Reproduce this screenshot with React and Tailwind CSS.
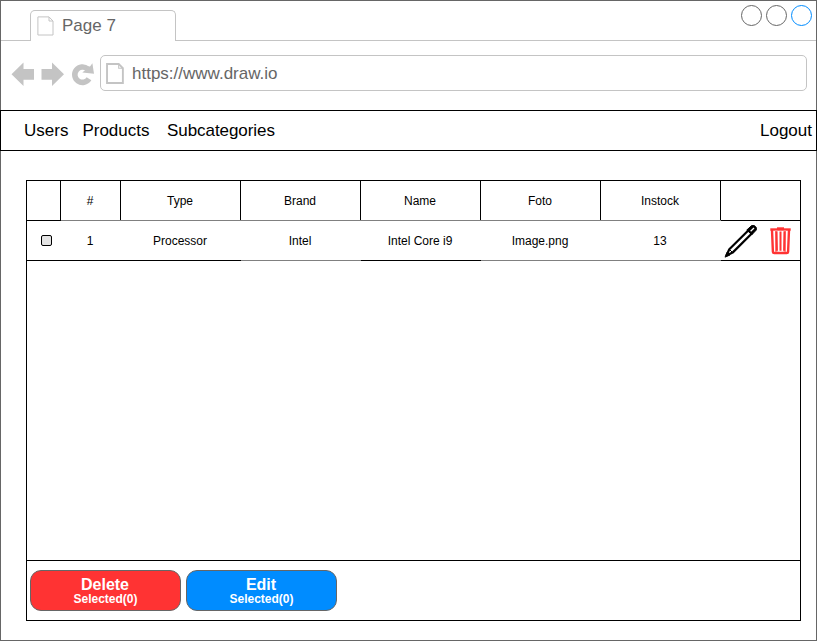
const columns = [
  { title: "", value: "check", width: "w-[34px]", head: "border-black", body: "border-black" },
  { title: "#", value: "1", width: "w-[60px]", head: "border-[#808080]", body: "border-black" },
  { title: "Type", value: "Processor", width: "w-[120px]", head: "border-[#808080]", body: "border-black" },
  { title: "Brand", value: "Intel", width: "w-[120px]", head: "border-[#808080]", body: "border-[#808080]" },
  { title: "Name", value: "Intel Core i9", width: "w-[120px]", head: "border-[#808080]", body: "border-black" },
  { title: "Foto", value: "Image.png", width: "w-[120px]", head: "border-[#808080]", body: "border-[#808080]" },
  { title: "Instock", value: "13", width: "w-[120px]", head: "border-[#808080]", body: "border-[#808080]" },
  { title: "", value: "actions", width: "w-[79px]", head: "border-black", body: "border-black" },
];

function PageIcon({ className, strokeWidth }) {
  return (
    <svg viewBox="0 0 17 20" className={className} fill="none" stroke="#c4c4c4" strokeWidth={strokeWidth}>
      <path d="M0.9 0.9H12L16 5V19H0.9Z" />
      <path d="M12 1V5H16" strokeWidth="1" />
    </svg>
  );
}

function BrowserIcons() {
  return (
    <svg width="84" height="26" viewBox="0 0 84 26" className="shrink-0" fill="#c4c4c4">
      <path d="M0.5 13.3L12.5 1.5V8H23V18.8H12.5V25Z" />
      <path d="M53 13.3L41 1.5V8H30.5V18.8H41V25Z" />
      <path d="M78 17.8A7.7 7.7 0 1 1 76.5 7.8" fill="none" stroke="#c4c4c4" strokeWidth="5.6" />
      <path d="M81.4 2.3L83 12.8L71.3 11.6L75.5 8L76 5.5L79 5.6Z" />
    </svg>
  );
}

function PencilIcon() {
  return (
    <svg width="34" height="34" viewBox="0 0 34 34" fill="none" stroke="#000" strokeLinejoin="round">
      <path d="M5.3 25.3L24.5 6.2L27.8 9.5L8.6 28.6L2.5 31.5Z" strokeWidth="2.2" />
      <path d="M5.3 25.3L8.6 28.6" strokeWidth="1" />
      <path d="M1 33.2L3 28.2L6 31Z" fill="#000" strokeWidth="0.8" />
      <path d="M22.8 6L27.6 1.6H30.3L32.3 3.5V6L27.8 10.8Z" fill="#000" strokeWidth="1" />
      <path d="M26.6 7.3L30 4" stroke="#fff" strokeWidth="1.3" />
    </svg>
  );
}

function TrashIcon() {
  return (
    <svg width="21" height="28" viewBox="0 0 21 28" fill="none" stroke="#ff3333">
      <path d="M0.3 2.5H20.7" strokeWidth="2.4" />
      <path d="M7 1.2H14" strokeWidth="1.8" />
      <path d="M2 3L2.9 24.8Q3 26 4.3 26H16.7Q18 26 18.1 24.8L19 3" strokeWidth="2.4" />
      <path d="M6.2 3V25M14.8 3V25" stroke="#ff8080" strokeWidth="2.4" />
      <path d="M6.4 4.5L6.9 23.8M10.5 4.5V23.8M14.6 4.5L14.1 23.8" strokeWidth="2" />
    </svg>
  );
}

function Cell({ value }) {
  if (value === "check") {
    return <span className="mr-[-5px] h-[11px] w-[11px] rounded-[2px] border border-black bg-[#e4e4e4]" />;
  }
  if (value === "actions") {
    return (
      <div className="flex w-full items-center gap-[12px] pl-[3px]">
        <PencilIcon />
        <TrashIcon />
      </div>
    );
  }
  return <span className="pr-[2px]">{value}</span>;
}

function ActionButton({ label, className }) {
  return (
    <button
      className={`flex h-[41px] w-[151px] flex-col items-center rounded-[11px] border border-[#666666] pt-[5px] font-bold text-white ${className}`}
    >
      <span className="pr-px text-[16px] leading-[17px]">{label}</span>
      <span className="text-[12px] leading-[12px]">Selected(0)</span>
    </button>
  );
}

export default function App() {
  return (
    <div className="flex h-[641px] w-[817px] flex-col overflow-hidden bg-white font-['Liberation_Sans',Arial,sans-serif]">
      <header className="flex h-[110px] shrink-0 flex-col border-x border-t border-[#666666] text-[17px] text-[#666666]">
        <div className="flex h-[40px] items-end">
          <div className="h-full w-[29px] border-b border-[#c4c4c4]" />
          <div className="flex h-[31px] w-[146px] items-start rounded-t-[5px] border-x border-t border-[#c4c4c4] pl-[6px]">
            <PageIcon className="mt-[5px] h-[20px] w-[17px]" strokeWidth="1" />
            <span className="ml-[8px] mt-[5px] leading-[19px]">Page 7</span>
          </div>
          <div className="flex h-full flex-1 items-start justify-end gap-1 border-b border-[#c4c4c4] pr-1 pt-1">
            <span className="h-[21px] w-[21px] rounded-full border border-[#666666]" />
            <span className="h-[21px] w-[21px] rounded-full border border-[#666666]" />
            <span className="h-[21px] w-[21px] rounded-full border border-[#008cff]" />
          </div>
        </div>
        <div className="flex pl-[10px] pt-[14px]">
          <div className="w-[89px] pt-[6px]">
            <BrowserIcons />
          </div>
          <div className="flex h-[36px] w-[707px] items-center rounded-[5px] border border-[#c4c4c4] pl-[5px]">
            <PageIcon className="h-[21px] w-[18px]" strokeWidth="1.8" />
            <span className="ml-[8px] leading-[19px]">https://www.draw.io</span>
          </div>
        </div>
      </header>

      <nav className="flex h-[41px] shrink-0 items-center border border-black pl-[23px] pr-[4px] text-[17px] text-black">
        <a>Users</a>
        <a className="ml-[14px]">Products</a>
        <a className="ml-[17.5px] tracking-[-0.06px]">Subcategories</a>
        <a className="ml-auto">Logout</a>
      </nav>

      <main className="flex-1 border-x border-b border-[#666666] pl-[25px] pt-[29px]">
        <div className="flex h-[441px] w-[775px] flex-col border border-black text-[12px] text-black">
          <div className="flex h-[40px] shrink-0">
            {columns.map((col, i) => (
              <div
                key={i}
                className={`flex shrink-0 items-center justify-center border-b ${col.width} ${col.head}`}
              >
                <div
                  className={`flex h-full w-full items-center justify-center pr-px ${i < columns.length - 1 ? "border-r border-black" : ""}`}
                >
                  {col.title}
                </div>
              </div>
            ))}
          </div>
          <div className="flex h-[40px] shrink-0">
            {columns.map((col, i) => (
              <div
                key={i}
                className={`flex shrink-0 items-center justify-center border-b ${col.width} ${col.body}`}
              >
                <Cell value={col.value} />
              </div>
            ))}
          </div>
          <div className="flex-1" />
          <div className="flex h-[60px] shrink-0 gap-[5px] border-t border-black pl-[3px] pt-[9px]">
            <ActionButton label="Delete" className="bg-[#ff3333]" />
            <ActionButton label="Edit" className="bg-[#008cff]" />
          </div>
        </div>
      </main>
    </div>
  );
}
